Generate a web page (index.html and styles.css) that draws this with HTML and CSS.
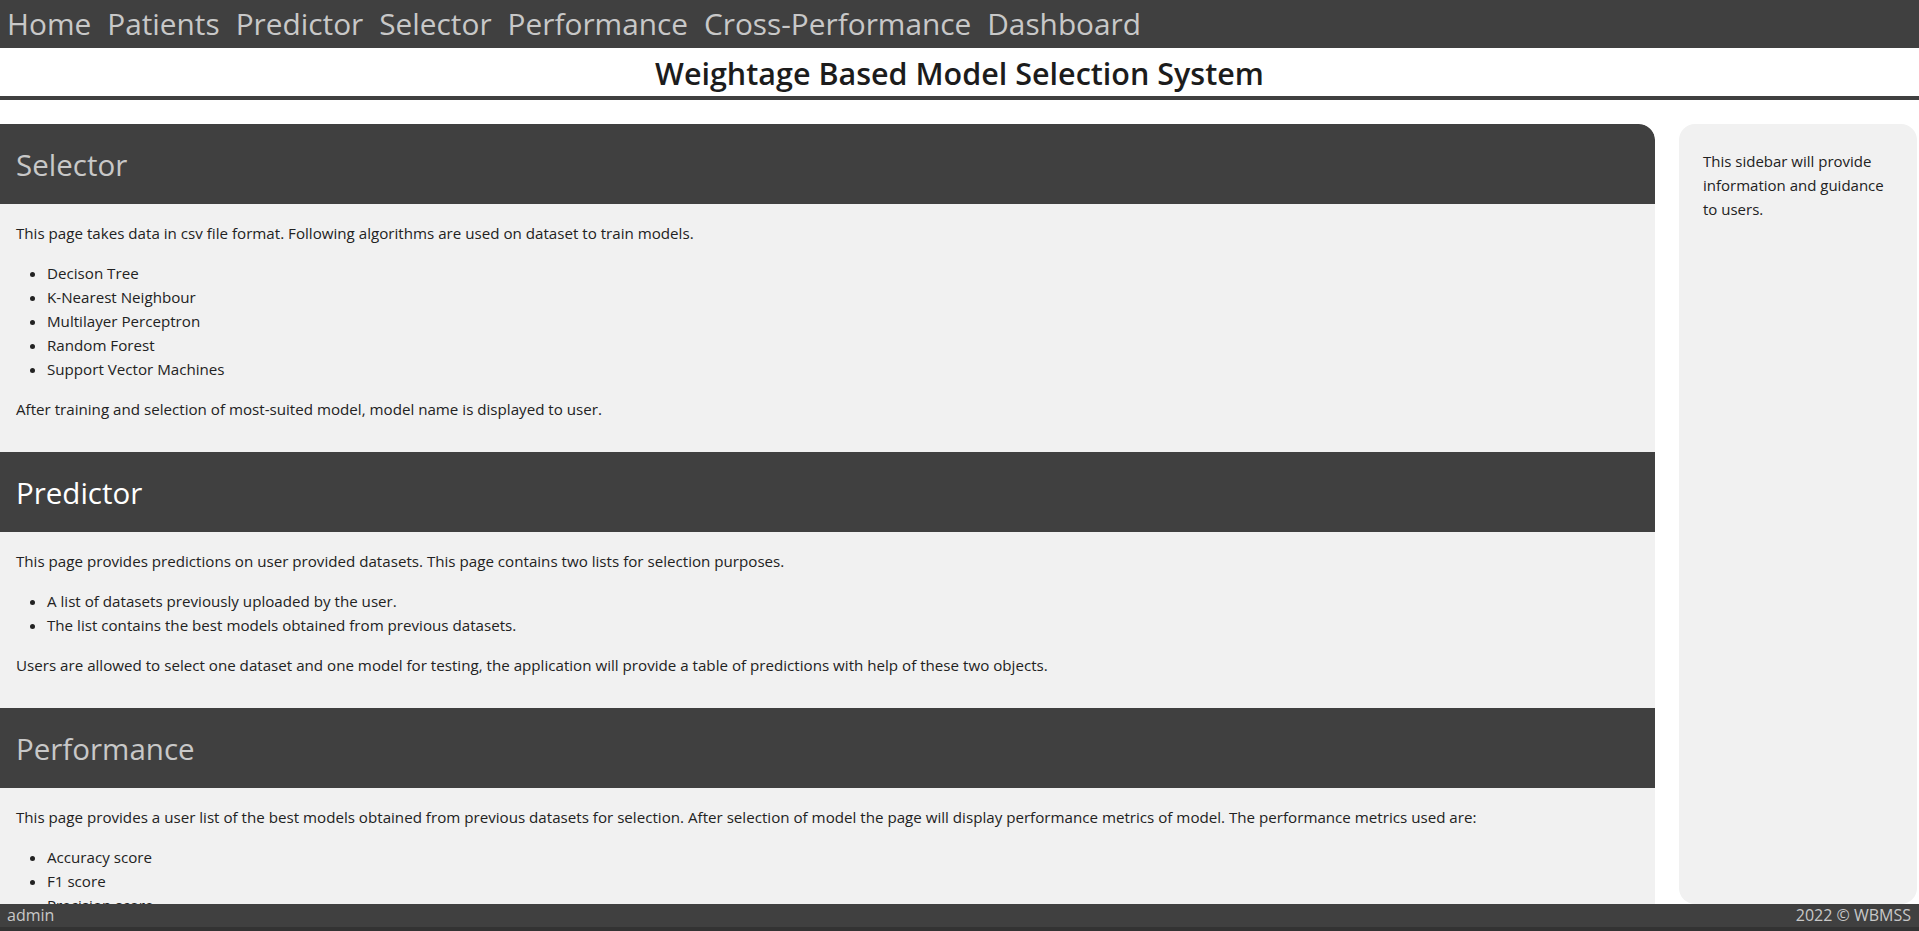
FILE: index.html
```html
<!DOCTYPE html>
<html lang="en">
<head>
<meta charset="utf-8">
<title>WBMSS</title>
<link rel="stylesheet" href="styles.css">
</head>
<body class="page">
  <nav class="topnav">
    <a class="nav-item" href="#">Home</a>
    <a class="nav-item" href="#">Patients</a>
    <a class="nav-item" href="#">Predictor</a>
    <a class="nav-item" href="#">Selector</a>
    <a class="nav-item" href="#">Performance</a>
    <a class="nav-item" href="#">Cross-Performance</a>
    <a class="nav-item" href="#">Dashboard</a>
  </nav>
  <header class="titlebar">
    <h1 class="title">Weightage Based Model Selection System</h1>
  </header>
  <div class="layout">
    <main class="main">
      <section class="card">
        <h2 class="card-head card-head-first">Selector</h2>
        <div class="card-body">
          <p>This page takes data in csv file format. Following algorithms are used on dataset to train models.</p>
          <ul>
            <li>Decison Tree</li>
            <li>K-Nearest Neighbour</li>
            <li>Multilayer Perceptron</li>
            <li>Random Forest</li>
            <li>Support Vector Machines</li>
          </ul>
          <p>After training and selection of most-suited model, model name is displayed to user.</p>
        </div>
      </section>
      <section class="card">
        <h2 class="card-head card-head-active">Predictor</h2>
        <div class="card-body">
          <p>This page provides predictions on user provided datasets. This page contains two lists for selection purposes.</p>
          <ul>
            <li>A list of datasets previously uploaded by the user.</li>
            <li>The list contains the best models obtained from previous datasets.</li>
          </ul>
          <p>Users are allowed to select one dataset and one model for testing, the application will provide a table of predictions with help of these two objects.</p>
        </div>
      </section>
      <section class="card">
        <h2 class="card-head">Performance</h2>
        <div class="card-body">
          <p>This page provides a user list of the best models obtained from previous datasets for selection. After selection of model the page will display performance metrics of model. The performance metrics used are:</p>
          <ul>
            <li>Accuracy score</li>
            <li>F1 score</li>
            <li>Precision score</li>
          </ul>
        </div>
      </section>
    </main>
    <aside class="sidebar">
      <p>This sidebar will provide information and guidance to users.</p>
    </aside>
  </div>
  <footer class="footer">
    <span>admin</span>
    <span>2022 © WBMSS</span>
  </footer>
</body>
</html>
```

FILE: styles.css
```css
html, body {
  margin: 0;
  height: 100%;
}

.page {
  display: flex;
  flex-direction: column;
  height: 100vh;
  overflow: hidden;
  background: #fff;
  color: #222;
  font-family: "Open Sans", "Noto Sans", sans-serif;
}

.topnav {
  flex: none;
  height: 48px;
  background: #404040;
  display: flex;
  align-items: center;
  padding-left: 0;
}

.nav-item {
  color: #c8c8c8;
  text-decoration: none;
  font-size: 29.8px;
  line-height: 48px;
  padding: 0 7px 0 7px;
  margin-right: 2px;
}

.titlebar {
  flex: none;
  height: 48px;
  border-bottom: 4px solid #404040;
  display: flex;
  align-items: center;
  justify-content: center;
}

.title {
  margin: 0;
  padding-top: 2px;
  font-size: 30.5px;
  font-weight: 600;
  color: #1c1c1c;
  line-height: 1;
}

.layout {
  flex: 1;
  min-height: 0;
  display: grid;
  grid-template-columns: 1fr 238px;
  grid-template-rows: minmax(0, 1fr);
  column-gap: 24px;
  padding: 24px 2px 0 0;
}

.main {
  min-height: 0;
  overflow: hidden;
  border-top-right-radius: 16px;
  background: #f1f1f1;
}

.card-head {
  margin: 0;
  height: 80px;
  padding: 0 16px;
  display: flex;
  align-items: center;
  background: #404040;
  color: #c8c8c8;
  font-size: 29.5px;
  font-weight: 400;
}

.card-head-first {
  border-top-right-radius: 16px;
}

.card-head-active {
  color: #fff;
}

.card-body {
  background: #f1f1f1;
  padding: 1px 16px 15px;
  font-size: 15.15px;
  line-height: 24px;
}

.card-body p {
  margin: 16px 0;
}

.card-body ul {
  margin: 16px 0;
  padding-left: 31px;
}

.sidebar {
  background: #f1f1f1;
  border-radius: 16px;
  padding: 1px 24px;
  font-size: 15px;
  line-height: 24px;
}

.sidebar p {
  margin: 24px 0;
}

.footer {
  flex: none;
  height: 23px;
  border-bottom: 4px solid #333;
  background: #404040;
  color: #c8c8c8;
  display: flex;
  justify-content: space-between;
  align-items: center;
  padding: 0 8px 0 7px;
  font-size: 16px;
  line-height: 23px;
}
```
